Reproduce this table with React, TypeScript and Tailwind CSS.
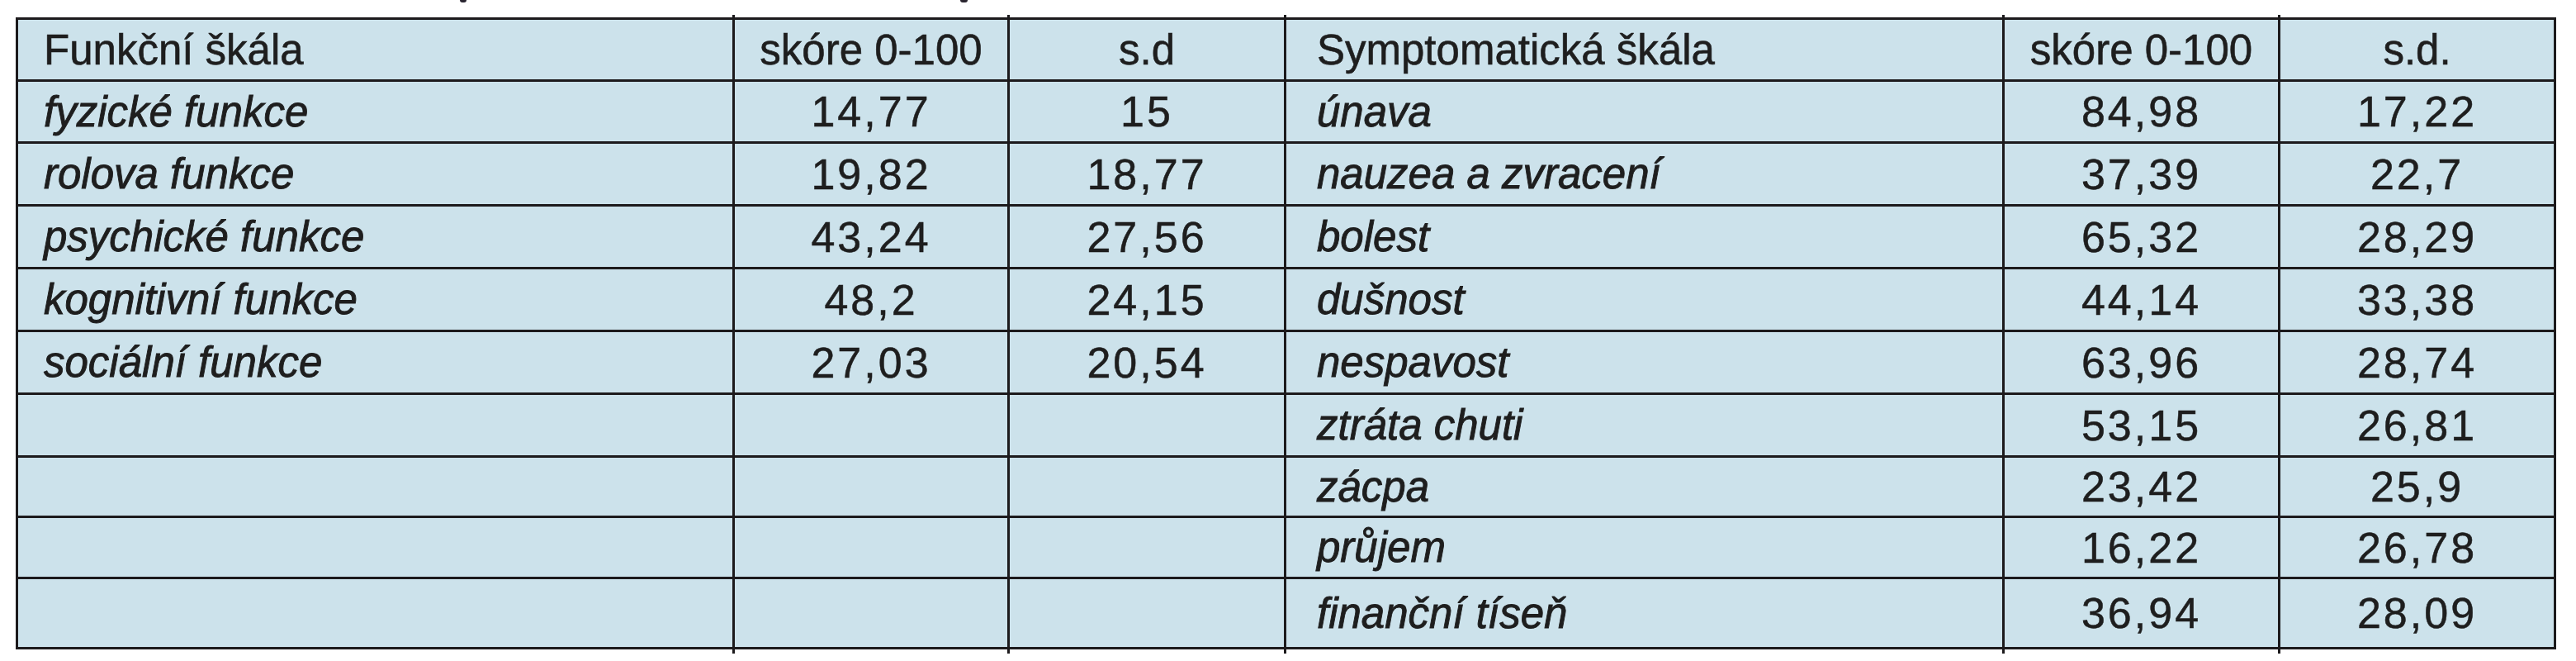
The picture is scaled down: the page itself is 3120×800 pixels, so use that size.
const left = [
  { name: "fyzické funkce", score: "14,77", sd: "15" },
  { name: "rolova funkce", score: "19,82", sd: "18,77" },
  { name: "psychické funkce", score: "43,24", sd: "27,56" },
  { name: "kognitivní funkce", score: "48,2", sd: "24,15" },
  { name: "sociální funkce", score: "27,03", sd: "20,54" },
];

const right = [
  { name: "únava", score: "84,98", sd: "17,22" },
  { name: "nauzea a zvracení", score: "37,39", sd: "22,7" },
  { name: "bolest", score: "65,32", sd: "28,29" },
  { name: "dušnost", score: "44,14", sd: "33,38" },
  { name: "nespavost", score: "63,96", sd: "28,74" },
  { name: "ztráta chuti", score: "53,15", sd: "26,81" },
  { name: "zácpa", score: "23,42", sd: "25,9" },
  { name: "průjem", score: "16,22", sd: "26,78" },
  { name: "finanční tíseň", score: "36,94", sd: "28,09" },
];

// row heights measured from the scan, bottom border included
const rowHeights = [
  "h-[75px]",
  "h-[76px]",
  "h-[76px]",
  "h-[76px]",
  "h-[76px]",
  "h-[76px]",
  "h-[73px]",
  "h-[74px]",
  "h-[82px]",
];

const cols = "grid grid-cols-[865px_333px_335px_870px_334px_334px]";
const line = "border-[#1c1a1c]";

function Ticks({ className }: { className: string }) {
  return (
    <div className={`grid grid-cols-[868px_333px_335px_870px_334px_334px] ${className}`}>
      <div />
      <div className={`border-l-[3px] ${line}`} />
      <div className={`border-l-[3px] ${line}`} />
      <div className={`border-l-[3px] ${line}`} />
      <div className={`border-l-[3px] ${line}`} />
      <div className={`border-l-[3px] ${line}`} />
    </div>
  );
}

function Label({ children, wide }: { children?: React.ReactNode; wide?: boolean }) {
  return (
    <div
      className={`flex items-center ${wide ? "pl-[37px] border-l-[3px]" : "pl-[31px]"} ${line} italic [-webkit-text-stroke:0.9px_#1e1e1e]`}
    >
      {children}
    </div>
  );
}

function Num({ children }: { children?: React.ReactNode }) {
  return (
    <div
      className={`flex items-center justify-center border-l-[3px] ${line} text-[52px] tracking-[3px] [-webkit-text-stroke:0.5px_#1e1e1e]`}
    >
      {children}
    </div>
  );
}

function Head({ children, center, divider }: { children: React.ReactNode; center?: boolean; divider?: boolean }) {
  return (
    <div
      className={`flex items-center ${center ? "justify-center" : divider ? "pl-[37px]" : "pl-[31px]"} ${divider ? "border-l-[3px]" : ""} ${line} [-webkit-text-stroke:0.6px_#1e1e1e]`}
    >
      {children}
    </div>
  );
}

export default function App() {
  return (
    <div className="w-[3120px] h-[800px] bg-white text-[#1e1e1e] font-['Liberation_Sans',Arial,sans-serif] text-[51px] leading-none">
      <div className="flex h-[18px] items-start">
        <span className="ml-[557px] h-[3px] w-[8px] rounded-b bg-[#2a2530]" />
        <span className="ml-[598px] h-[3px] w-[9px] rounded-b bg-[#2a2530]" />
      </div>

      <div className="pl-[19px]">
        <Ticks className="h-[3px]" />

        <div className={`w-[3077px] border-[3px] ${line} bg-[#cce2eb]`}>
          {/* header */}
          <div className={`${cols} h-[75px] border-b-[3px] ${line}`}>
            <Head>Funkční škála</Head>
            <Head center divider>skóre 0-100</Head>
            <Head center divider>s.d</Head>
            <Head divider>Symptomatická škála</Head>
            <Head center divider>skóre 0-100</Head>
            <Head center divider>s.d.</Head>
          </div>

          {right.map((r, i) => {
            const l = left[i];
            const last = i === right.length - 1;
            return (
              <div
                key={r.name}
                className={`${cols} ${rowHeights[i]} ${last ? "" : `border-b-[3px] ${line}`}`}
              >
                <Label>{l?.name}</Label>
                <Num>{l?.score}</Num>
                <Num>{l?.sd}</Num>
                <Label wide>{r.name}</Label>
                <Num>{r.score}</Num>
                <Num>{r.sd}</Num>
              </div>
            );
          })}
        </div>

        <Ticks className="h-[5px]" />
      </div>
    </div>
  );
}
